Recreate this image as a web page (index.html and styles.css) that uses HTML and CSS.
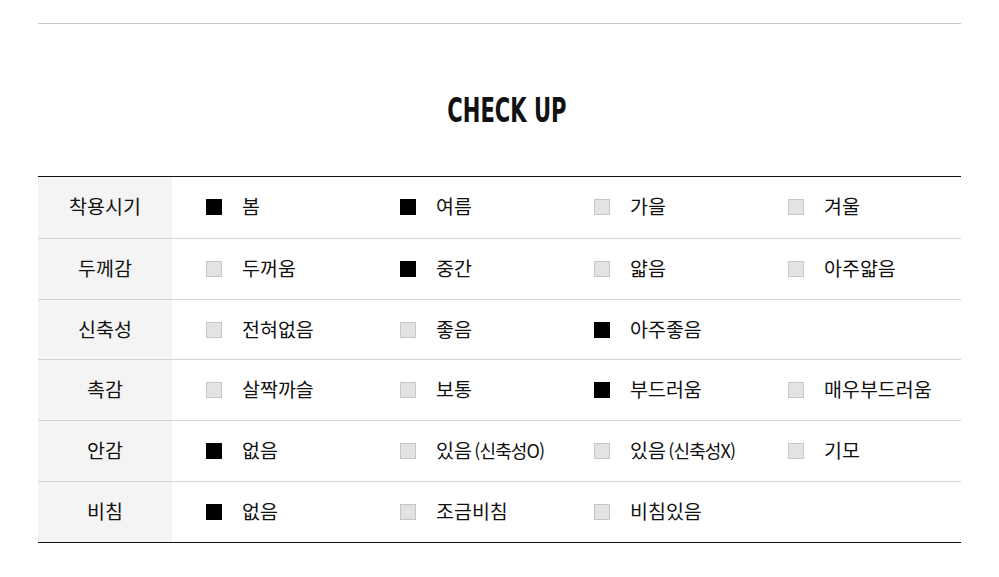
FILE: index.html
```html
<!DOCTYPE html>
<html lang="ko">
<head>
<meta charset="utf-8">
<title>CHECK UP</title>
<link rel="stylesheet" href="styles.css">
</head>
<body>
<div class="wrap">
  <div class="title-box">
    <h2 class="title"><span class="title-text">CHECK UP</span></h2>
  </div>
  <div class="table">
    <div class="row first">
      <div class="head">착용시기</div>
      <div class="opts">
        <div class="opt"><i class="box on"></i><span>봄</span></div>
        <div class="opt"><i class="box on"></i><span>여름</span></div>
        <div class="opt"><i class="box"></i><span>가을</span></div>
        <div class="opt"><i class="box"></i><span>겨울</span></div>
      </div>
    </div>
    <div class="row">
      <div class="head">두께감</div>
      <div class="opts">
        <div class="opt"><i class="box"></i><span>두꺼움</span></div>
        <div class="opt"><i class="box on"></i><span>중간</span></div>
        <div class="opt"><i class="box"></i><span>얇음</span></div>
        <div class="opt"><i class="box"></i><span>아주얇음</span></div>
      </div>
    </div>
    <div class="row">
      <div class="head">신축성</div>
      <div class="opts">
        <div class="opt"><i class="box"></i><span>전혀없음</span></div>
        <div class="opt"><i class="box"></i><span>좋음</span></div>
        <div class="opt"><i class="box on"></i><span>아주좋음</span></div>
      </div>
    </div>
    <div class="row">
      <div class="head">촉감</div>
      <div class="opts">
        <div class="opt"><i class="box"></i><span>살짝까슬</span></div>
        <div class="opt"><i class="box"></i><span>보통</span></div>
        <div class="opt"><i class="box on"></i><span>부드러움</span></div>
        <div class="opt"><i class="box"></i><span>매우부드러움</span></div>
      </div>
    </div>
    <div class="row">
      <div class="head">안감</div>
      <div class="opts">
        <div class="opt"><i class="box on"></i><span>없음</span></div>
        <div class="opt"><i class="box"></i><span>있음 <small class="note">(신축성O)</small></span></div>
        <div class="opt"><i class="box"></i><span>있음 <small class="note">(신축성X)</small></span></div>
        <div class="opt"><i class="box"></i><span>기모</span></div>
      </div>
    </div>
    <div class="row last">
      <div class="head">비침</div>
      <div class="opts">
        <div class="opt"><i class="box on"></i><span>없음</span></div>
        <div class="opt"><i class="box"></i><span>조금비침</span></div>
        <div class="opt"><i class="box"></i><span>비침있음</span></div>
      </div>
    </div>
  </div>
</div>
</body>
</html>
```

FILE: styles.css
```css
html, body {
  margin: 0;
  padding: 0;
  background: #fff;
}
body {
  font-family: "Noto Sans CJK KR", "Noto Sans", sans-serif;
  color: #111;
}
.wrap {
  width: 923px;
  margin: 23px 0 0 38px;
  border-top: 1px solid #c8c8c8;
}
.title-box {
  box-sizing: border-box;
  height: 152px;
  padding: 20px 0 0 15px;
  display: flex;
  align-items: center;
  justify-content: center;
}
.title {
  margin: 0;
  font-family: "DejaVu Sans Condensed", "Liberation Sans", sans-serif;
  font-weight: bold;
  font-size: 33px;
  line-height: 1;
  color: #111;
}
.title-text {
  display: inline-block;
  transform: scaleX(0.71);
}
.table {
  border-top: 1px solid #111;
  border-bottom: 1px solid #111;
}
.row {
  display: flex;
  box-sizing: border-box;
  height: 60.84px;
  border-bottom: 1px solid #d4d4d4;
}
.row.first {
  height: 61.84px;
}
.row.last {
  height: 59.84px;
  border-bottom: none;
}
.head {
  width: 134px;
  flex: none;
  box-sizing: border-box;
  padding-bottom: 3px;
  background: #f4f4f4;
  display: flex;
  align-items: center;
  justify-content: center;
  font-size: 19.5px;
}
.opts {
  display: flex;
  align-items: center;
  box-sizing: border-box;
  padding: 0 0 3px 34px;
}
.opt {
  width: 194px;
  display: flex;
  align-items: center;
  font-size: 19.5px;
}
.box {
  width: 16px;
  height: 16px;
  box-sizing: border-box;
  background: #e3e3e3;
  border: 1px solid #c6c6c6;
  margin: 3px 20px 0 0;
  flex: none;
}
.box.on {
  background: #000;
  border-color: #000;
}
.note {
  font-size: 18px;
  letter-spacing: -0.9px;
  margin-left: -3px;
}
```
